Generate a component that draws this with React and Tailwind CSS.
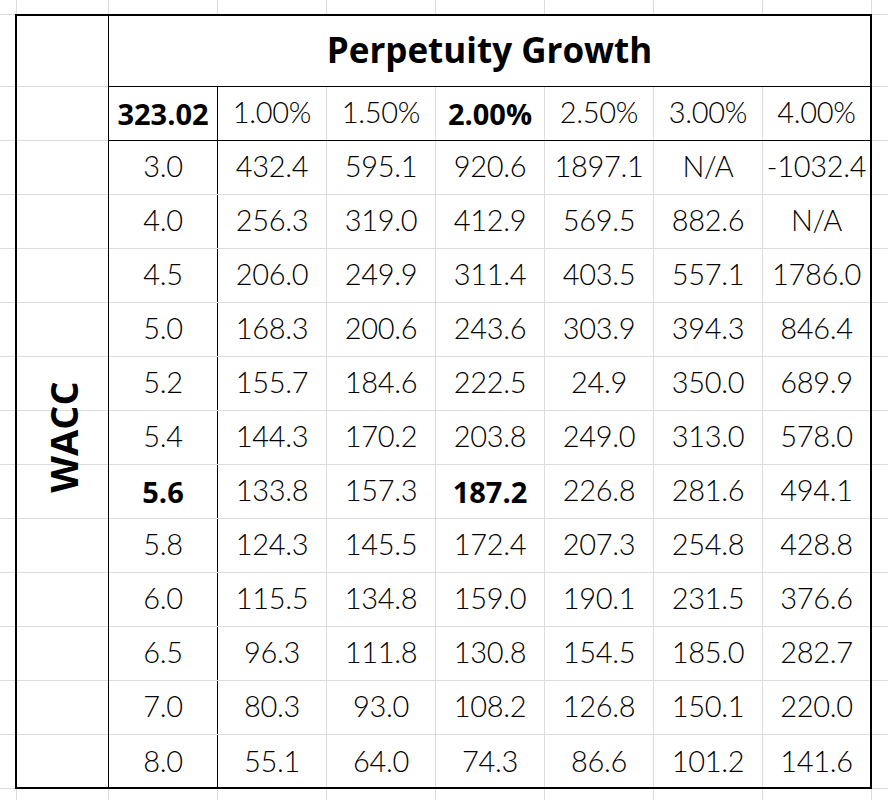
import React from "react";

const growth = ["1.00%", "1.50%", "2.00%", "2.50%", "3.00%", "4.00%"];

const rows = [
  ["3.0", "432.4", "595.1", "920.6", "1897.1", "N/A", "-1032.4"],
  ["4.0", "256.3", "319.0", "412.9", "569.5", "882.6", "N/A"],
  ["4.5", "206.0", "249.9", "311.4", "403.5", "557.1", "1786.0"],
  ["5.0", "168.3", "200.6", "243.6", "303.9", "394.3", "846.4"],
  ["5.2", "155.7", "184.6", "222.5", "24.9", "350.0", "689.9"],
  ["5.4", "144.3", "170.2", "203.8", "249.0", "313.0", "578.0"],
  ["5.6", "133.8", "157.3", "187.2", "226.8", "281.6", "494.1"],
  ["5.8", "124.3", "145.5", "172.4", "207.3", "254.8", "428.8"],
  ["6.0", "115.5", "134.8", "159.0", "190.1", "231.5", "376.6"],
  ["6.5", "96.3", "111.8", "130.8", "154.5", "185.0", "282.7"],
  ["7.0", "80.3", "93.0", "108.2", "126.8", "150.1", "220.0"],
  ["8.0", "55.1", "64.0", "74.3", "86.6", "101.2", "141.6"],
];

// base wacc / growth are shown in bold
const BASE_ROW = 6;
const BASE_COL = 3;

// plain sheet gridlines above / below the table
const GridStrip = ({ className }) => (
  <div className={`flex ${className}`}>
    <div className="w-[17px] shrink-0 border-r border-[#dcdcdc]" />
    <div className="w-[92px] shrink-0 border-r border-[#dcdcdc]" />
    {[0, 1, 2, 3, 4, 5, 6].map((i) => (
      <div key={i} className="w-[109px] shrink-0 border-r border-[#dcdcdc]" />
    ))}
    <div className="flex-1" />
  </div>
);

// plain sheet gridlines left / right of the table
const SideStrip = ({ className }) => (
  <div className={`flex flex-col border-t border-[#dcdcdc] ${className}`}>
    <div className="h-[72px] shrink-0 border-b border-[#dcdcdc]" />
    {Array.from({ length: 13 }).map((_, i) => (
      <div key={i} className="h-[54px] shrink-0 border-b border-[#dcdcdc]" />
    ))}
  </div>
);

const Cell = ({ children, bold, last, divider }) => (
  <div
    className={`flex items-center justify-center ${
      last ? "flex-1" : "w-[109px] shrink-0 border-r"
    } ${divider ? "border-black" : "border-[#dcdcdc]"} ${
      bold
        ? "font-bold font-['Open_Sans',sans-serif] text-[29px]"
        : "font-light font-['Lato','Open_Sans',sans-serif] text-[29px] tracking-[-0.01em] pb-[4px]"
    }`}
  >
    {children}
  </div>
);

export default function App() {
  return (
    <div className="w-[888px] h-[800px] bg-white overflow-hidden flex flex-col text-black font-['Open_Sans',sans-serif]">
      <GridStrip className="h-[14px] shrink-0" />

      <div className="flex h-[775px] shrink-0">
        <SideStrip className="w-[15px] shrink-0" />

        {/* Table */}
        <div className="w-[857px] shrink-0 h-[775px] border-2 border-black flex overflow-hidden">
          {/* WACC column */}
          <div className="relative w-[92px] shrink-0 border-r border-black flex flex-col">
            <div className="h-[71px] shrink-0 border-b border-[#dcdcdc]" />
            {Array.from({ length: 13 }).map((_, i) => (
              <div key={i} className="h-[54px] shrink-0 border-b border-[#dcdcdc]" />
            ))}
            <div className="absolute inset-x-0 top-[70px] bottom-0 flex items-center justify-center">
              <span className="-rotate-90 text-[38px] font-bold leading-none whitespace-nowrap">
                WACC
              </span>
            </div>
          </div>

          {/* Grid */}
          <div className="flex-1 flex flex-col leading-none">
            <div className="h-[71px] shrink-0 border-b border-black flex items-center justify-center pb-1">
              <span className="text-[35px] font-bold">Perpetuity Growth</span>
            </div>

            <div className="h-[54px] shrink-0 border-b border-black flex">
              <Cell bold divider>323.02</Cell>
              {growth.map((g, i) => (
                <Cell key={g} bold={i + 1 === BASE_COL} last={i === growth.length - 1}>
                  {g}
                </Cell>
              ))}
            </div>

            {rows.map((row, r) => (
              <div
                key={row[0]}
                className={`h-[54px] shrink-0 flex ${
                  r === rows.length - 1 ? "" : "border-b border-[#dcdcdc]"
                }`}
              >
                <Cell bold={r === BASE_ROW} divider>
                  {row[0]}
                </Cell>
                {row.slice(1).map((v, c) => (
                  <Cell
                    key={c}
                    bold={r === BASE_ROW && c + 1 === BASE_COL}
                    last={c === row.length - 2}
                  >
                    {v}
                  </Cell>
                ))}
              </div>
            ))}
          </div>
        </div>

        <SideStrip className="flex-1" />
      </div>

      <GridStrip className="flex-1" />
    </div>
  );
}
